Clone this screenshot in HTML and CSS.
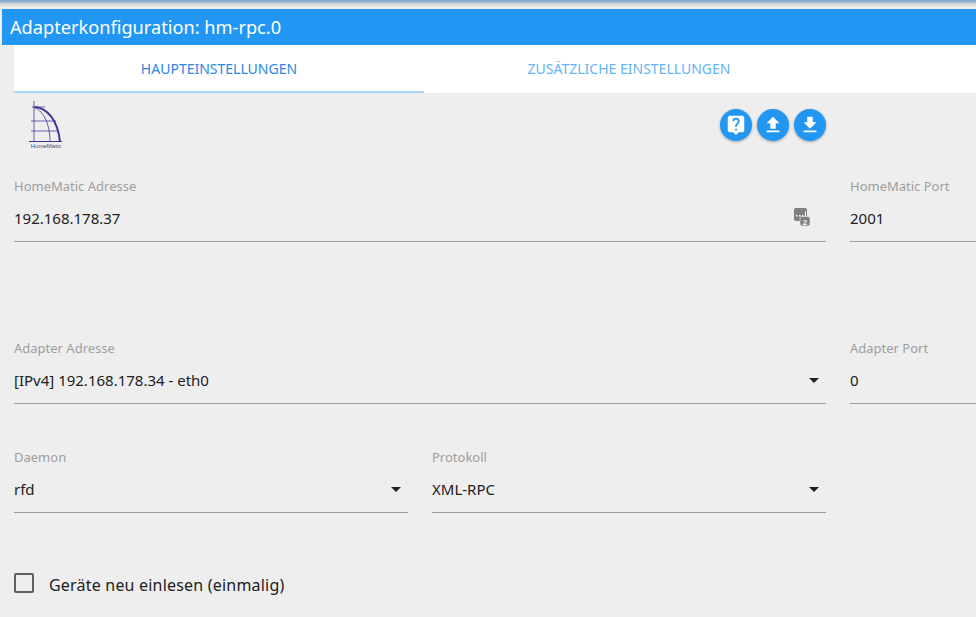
FILE: index.html
```html
<!DOCTYPE html>
<html lang="de">
<head>
<meta charset="utf-8">
<title>Adapterkonfiguration</title>
<link rel="stylesheet" href="styles.css">
</head>
<body>
<div class="topstrip"></div>
<header class="titlebar">Adapterkonfiguration: hm-rpc.0</header>
<main class="content">
  <nav class="tabs">
    <div class="tab active">HAUPTEINSTELLUNGEN</div>
    <div class="tab">ZUSÄTZLICHE EINSTELLUNGEN</div>
  </nav>
  <div class="toolbar">
    <svg class="logo" viewBox="0 0 40 50" width="40" height="50" aria-label="HomeMatic">
      <g class="logolines" fill="none" stroke="#3f3596">
        <path d="M11 2V42" stroke-width="1.200" opacity=".65"/>
        <path d="M12 8C24 9 35 21 37 43" stroke-width="2"/>
        <path d="M10 8C20 11 27 24 27 43" stroke-width="1" opacity=".8"/>
        <path d="M9 8H22M8 22H33M8 32H35" stroke-width="1" opacity=".75"/>
        <path d="M6 42.500H39" stroke-width="1.200"/>
      </g>
      <text x="23" y="49" class="logotext">HomeMatic</text>
    </svg>
    <div class="actions">
      <button class="fab"><svg viewBox="0 0 24 24" width="24" height="24"><path fill="#fff" d="M19 2H5a2 2 0 0 0-2 2v14a2 2 0 0 0 2 2h4l3 3 3-3h4a2 2 0 0 0 2-2V4a2 2 0 0 0-2-2zm-6 16h-2v-2h2v2zm2.070-7.750-.9.920C13.450 11.900 13 12.500 13 14h-2v-.5c0-1.100.450-2.100 1.170-2.830l1.240-1.260c.370-.360.590-.860.590-1.410a2 2 0 0 0-4 0H8a4 4 0 0 1 8 0c0 .880-.360 1.680-.930 2.250z"/></svg></button>
      <button class="fab"><svg viewBox="0 0 24 24" width="24" height="24"><path fill="#fff" d="M9 16h6v-6h4l-7-7-7 7h4v6zm-4 2h14v2H5v-2z"/></svg></button>
      <button class="fab"><svg viewBox="0 0 24 24" width="24" height="24"><path fill="#fff" d="M19 9h-4V3H9v6H5l7 7 7-7zM5 18v2h14v-2H5z"/></svg></button>
    </div>
  </div>
  <div class="row row-first">
    <div class="field wide">
      <label class="caption">HomeMatic Adresse</label>
      <div class="value">192.168.178.37
        <svg class="ipicon" viewBox="0 0 16 18" width="16" height="18"><rect x="0" y="0" width="13" height="13" rx="2" fill="#808080"/><rect x="6" y="8.500" width="10" height="9.500" rx="2" fill="#808080" stroke="#eee" stroke-width=".6"/><path d="M2 7h1.500v1.500H2zM5 7h1.500v1.500H5zM8 7h1.500v1.500H8zM11 3.500h1V8.500h-1z" fill="#fff"/><text x="11" y="16.500" class="two">2</text></svg>
      </div>
    </div>
    <div class="field port">
      <label class="caption">HomeMatic Port</label>
      <div class="value">2001</div>
    </div>
  </div>
  <div class="row row-second">
    <div class="field wide">
      <label class="caption">Adapter Adresse</label>
      <div class="value">[IPv4] 192.168.178.34 - eth0<span class="caret"></span></div>
    </div>
    <div class="field port">
      <label class="caption">Adapter Port</label>
      <div class="value">0</div>
    </div>
  </div>
  <div class="row row-third">
    <div class="field half">
      <label class="caption">Daemon</label>
      <div class="value">rfd<span class="caret"></span></div>
    </div>
    <div class="field half">
      <label class="caption">Protokoll</label>
      <div class="value">XML-RPC<span class="caret"></span></div>
    </div>
  </div>
  <label class="check"><span class="box"></span>Geräte neu einlesen (einmalig)</label>
</main>
</body>
</html>
```
FILE: styles.css
```css
* { box-sizing: border-box; }
html, body { margin: 0; height: 617px; overflow: hidden; }
body {
  background: #eeeeee;
  font-family: "Noto Sans", "Open Sans", sans-serif;
  color: #212121;
}
.topstrip {
  height: 9px;
  background: linear-gradient(#7fa8cf 0, #8fb0d0 2px, #c9c9c9 3px, #eeeeee 7px);
}
.titlebar {
  height: 36px;
  margin-left: 2px;
  padding-left: 8px;
  background: #2196f3;
  color: #fff;
  font-size: 18.200px;
  line-height: 37px;
}
.content { padding-left: 14px; }
.tabs {
  display: flex;
  height: 48px;
  background: #fff;
}
.tab {
  width: 410px;
  color: #64b5f6;
  font-size: 14px;
  text-align: center;
  line-height: 47px;
}
.tab.active {
  color: #2c87e8;
  border-bottom: 2px solid #a6d5fa;
}
.toolbar {
  display: flex;
  justify-content: space-between;
  width: 812px;
  height: 85px;
}
.logo { display: block; margin: 6px 0 0 9px; }
.logolines { filter: blur(.3px); }
.logotext { font-size: 6px; fill: #4a4a7a; text-anchor: middle; font-family: "Liberation Sans", sans-serif; }
.actions { display: flex; gap: 5px; padding-top: 16px; align-items: flex-start; }
.fab {
  width: 32px;
  height: 32px;
  padding: 0;
  border: 0;
  border-radius: 50%;
  background: #2196f3;
  display: flex;
  align-items: center;
  justify-content: center;
  box-shadow: 0 1px 3px rgba(0,0,0,.3);
}
.fab svg { width: 22px; height: 22px; }
.row { display: flex; gap: 24px; }
.row-first { height: 162px; }
.row-second { height: 109px; }
.row-third { height: 109px; }
.field { display: flex; flex-direction: column; }
.wide { width: 812px; }
.half { width: 394px; }
.port { flex: 1; margin-right: -10px; }
.caption {
  height: 20px;
  color: #9e9e9e;
  font-size: 13px;
  line-height: 16px;
}
.value {
  position: relative;
  height: 44px;
  border-bottom: 1px solid #9e9e9e;
  padding-top: 10px;
  font-size: 15px;
  line-height: 20px;
  color: #212121;
}
.caret {
  position: absolute;
  right: 7px;
  top: 18px;
  border-left: 5px solid transparent;
  border-right: 5px solid transparent;
  border-top: 5px solid #212121;
}
.ipicon { position: absolute; right: 16px; top: 10px; }
.two { font-size: 8px; font-weight: 700; fill: #fff; text-anchor: middle; font-family: "Liberation Sans", sans-serif; }
.check {
  display: flex;
  align-items: center;
  font-size: 16px;
  letter-spacing: .2px;
  height: 20px;
  margin-top: 17px;
}
.box {
  width: 20px;
  height: 20px;
  margin-right: 15px;
  margin-bottom: 4px;
  border: 2px solid #616161;
  border-radius: 2px;
}
```
